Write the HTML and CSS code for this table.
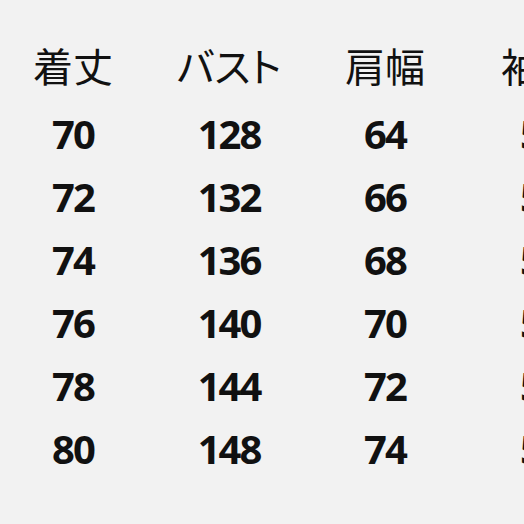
FILE: index.html
```html
<!DOCTYPE html>
<html lang="ja">
<head>
<meta charset="utf-8">
<link rel="stylesheet" href="styles.css">
</head>
<body>
<div class="chart">
  <div class="row head">
    <div class="cell">着丈</div>
    <div class="cell">バスト</div>
    <div class="cell">肩幅</div>
    <div class="cell">袖丈</div>
  </div>
  <div class="row num"><div class="cell">70</div><div class="cell">128</div><div class="cell">64</div><div class="cell">54</div></div>
  <div class="row num"><div class="cell">72</div><div class="cell">132</div><div class="cell">66</div><div class="cell">55</div></div>
  <div class="row num"><div class="cell">74</div><div class="cell">136</div><div class="cell">68</div><div class="cell">56</div></div>
  <div class="row num"><div class="cell">76</div><div class="cell">140</div><div class="cell">70</div><div class="cell">57</div></div>
  <div class="row num"><div class="cell">78</div><div class="cell">144</div><div class="cell">72</div><div class="cell">58</div></div>
  <div class="row num"><div class="cell">80</div><div class="cell">148</div><div class="cell">74</div><div class="cell">59</div></div>
</div>
</body>
</html>
```
FILE: styles.css
```css
html, body {
  margin: 0;
  padding: 0;
  width: 524px;
  height: 524px;
  overflow: hidden;
  background: #f2f2f2;
}
.chart {
  margin-left: -5px;
  padding-top: 33px;
  display: flex;
  flex-direction: column;
  color: #111;
}
.row {
  display: grid;
  grid-template-columns: 156px 156px 156px 156px;
  height: 63px;
  align-items: center;
}
.cell {
  text-align: center;
  white-space: nowrap;
}
.head {
  margin-bottom: 6px;
  font-family: "Noto Sans CJK JP", sans-serif;
  font-size: 40px;
  font-weight: 400;
  font-feature-settings: "palt";
}
.num {
  font-family: "Noto Sans", sans-serif;
  font-size: 40px;
  font-weight: 700;
  letter-spacing: -2px;
}
```
